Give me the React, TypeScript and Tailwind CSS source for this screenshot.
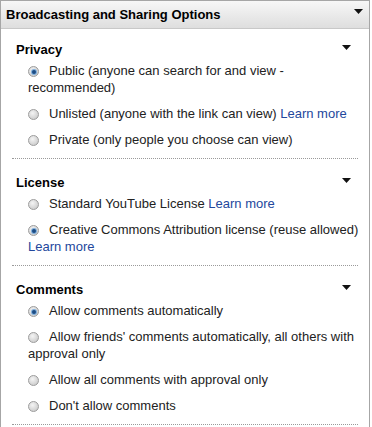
import React from "react";

type Option = { label: string; link?: boolean; checked?: boolean };

type Section = { title: string; options: Option[] };

const sections: Section[] = [
  {
    title: "Privacy",
    options: [
      { label: "Public (anyone can search for and view - recommended)", checked: true },
      { label: "Unlisted (anyone with the link can view)", link: true },
      { label: "Private (only people you choose can view)" },
    ],
  },
  {
    title: "License",
    options: [
      { label: "Standard YouTube License", link: true },
      { label: "Creative Commons Attribution license (reuse allowed)", link: true, checked: true },
    ],
  },
  {
    title: "Comments",
    options: [
      { label: "Allow comments automatically", checked: true },
      { label: "Allow friends' comments automatically, all others with approval only" },
      { label: "Allow all comments with approval only" },
      { label: "Don't allow comments" },
    ],
  },
];

function Radio({ checked }: { checked?: boolean }) {
  return (
    <span className="relative top-[1px] mr-[10px] inline-block h-[11px] w-[11px] rounded-full border border-[#9c9c9c] bg-[radial-gradient(circle_at_40%_35%,#f4f4f4,#c2c2c2)] align-[-1px]">
      {checked && (
        <span className="absolute left-[2.5px] top-[2.5px] h-[4px] w-[4px] rounded-full bg-[#1d4c84] shadow-[0_0_0_1px_#7eaedc]" />
      )}
    </span>
  );
}

function Caret({ className }: { className?: string }) {
  return (
    <svg width="9" height="5" viewBox="0 0 9 5" className={className}>
      <path d="M0 0h9L4.5 5z" fill="#111" />
    </svg>
  );
}

export default function App() {
  return (
    <div
      className="h-[427px] w-[372px] bg-white text-[13px] text-[#222]"
      style={{ fontFamily: '"Liberation Sans", Arial, sans-serif' }}
    >
      <div className="h-full w-[370px] border-x border-t border-[#a6a6a6]">
        <div className="flex h-[28px] items-center justify-between border-b border-[#c8c8c8] bg-gradient-to-b from-[#f7f7f7] to-[#dedede] pl-[5px] pr-[6px]">
          <span className="text-[13px] font-bold text-black">Broadcasting and Sharing Options</span>
          <Caret className="mb-[6px]" />
        </div>
        <div className="px-[11px]">
          {sections.map((s, i) => (
            <div
              key={s.title}
              className={`border-b border-dotted border-[#9a9a9a] pb-[10px] ${i === 0 ? "pt-[12px]" : "pt-[15px]"}`}
            >
              <div className="flex items-center justify-between pl-[4px] pr-[7px]">
                <span className="text-[13px] font-bold leading-[18px] text-black">{s.title}</span>
                <Caret className="mb-[6px]" />
              </div>
              <div className="mt-[3px] flex flex-col gap-[9px] pl-[16px]">
                {s.options.map((o) => (
                  <div key={o.label} className="-mr-[2px] leading-[17px]">
                    <Radio checked={o.checked} />
                    {o.label}
                    {o.link && (
                      <>
                        {" "}
                        <a className="text-[#23479c]">Learn more</a>
                      </>
                    )}
                  </div>
                ))}
              </div>
            </div>
          ))}
        </div>
      </div>
    </div>
  );
}
